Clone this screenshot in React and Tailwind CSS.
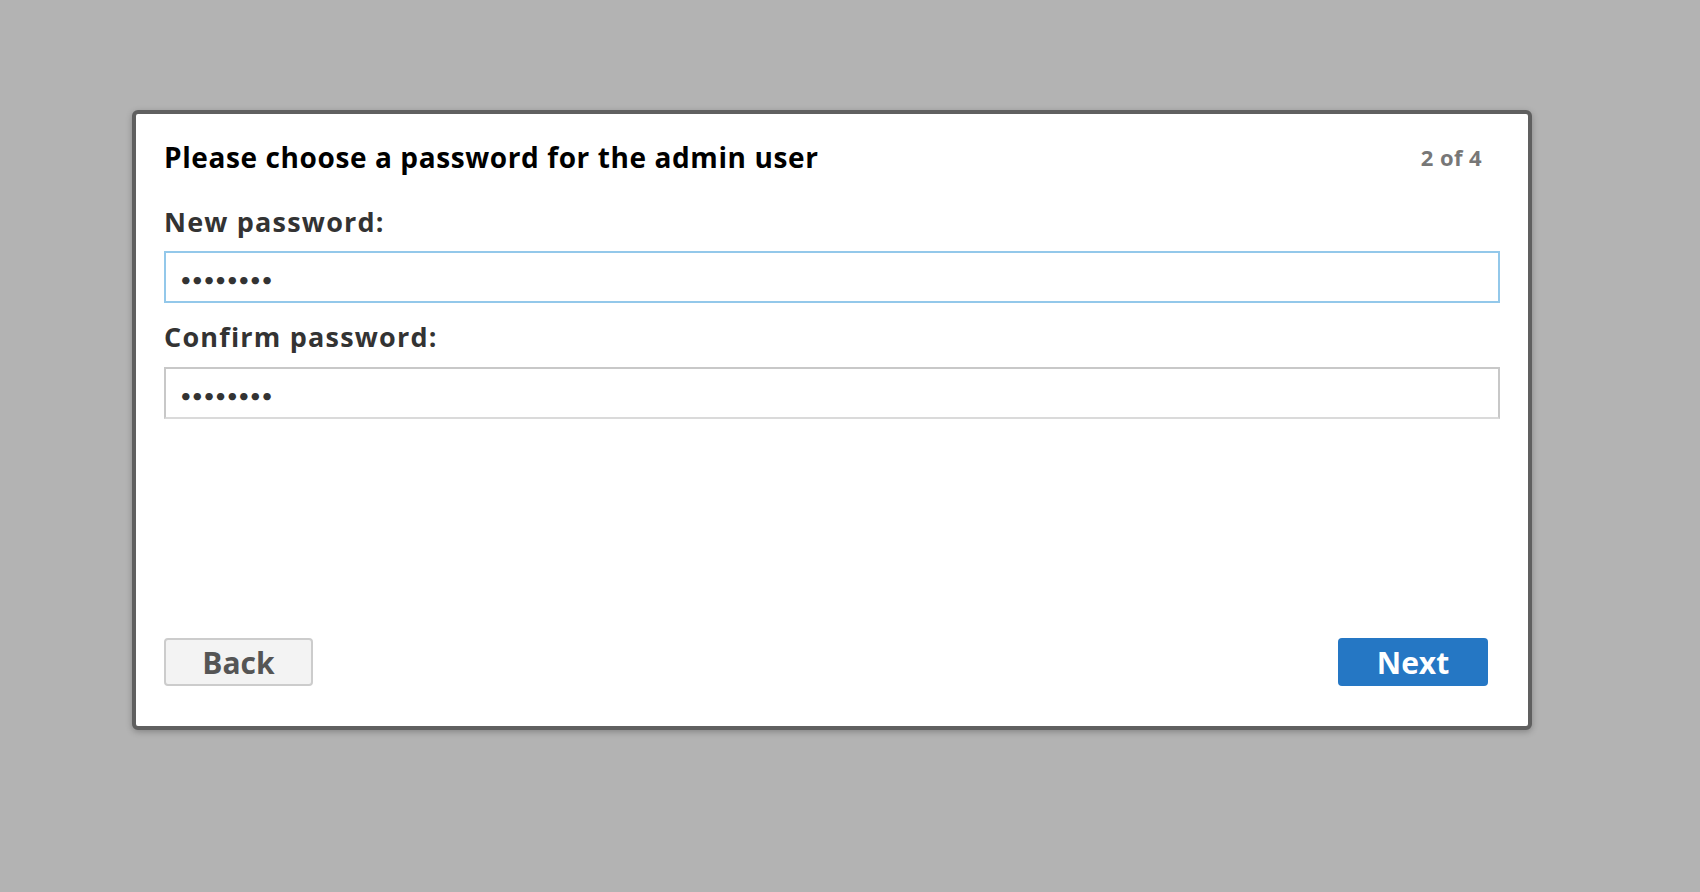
import React from "react";

const font = { fontFamily: "'Open Sans', Lato, Arial, sans-serif" };
const dots = { fontFamily: "Lato, 'Open Sans', Arial, sans-serif" };

export default function App() {
  return (
    <div className="min-h-[892px] w-full bg-[#b3b3b3] pt-[110px] pl-[132px]" style={font}>
      <div className="flex h-[620px] w-[1400px] flex-col rounded-[6px] border-4 border-[#606060] bg-white px-[28px] shadow-[0_2px_6px_rgba(0,0,0,0.25)]">
        <div className="mt-[26px] flex items-start justify-between">
          <h1 className="text-[28px] font-bold leading-[34px] tracking-[0.6px] text-black">
            Please choose a password for the admin user
          </h1>
          <span className="mr-[18px] text-[22px] font-bold leading-[34px] tracking-[0.4px] text-[#777]">2 of 4</span>
        </div>

        <label className="mt-[31px] block text-[27px] font-bold leading-[34px] tracking-[1.2px] text-[#333]">New password:</label>
        <input
          type="password"
          defaultValue="password"
          style={dots}
          className="mt-[12px] h-[52px] w-full border-2 border-[#93c8ea] px-[14px] pt-[3px] text-[20px] text-[#333] outline-none"
        />

        <label className="mt-[17px] block text-[27px] font-bold leading-[34px] tracking-[1.2px] text-[#333]">Confirm password:</label>
        <input
          type="password"
          defaultValue="password"
          style={dots}
          className="mt-[13px] h-[52px] w-full border-2 border-[#c8c8c8] border-b-[#dadada] px-[14px] pt-[3px] text-[20px] text-[#333] outline-none"
        />

        <div className="mt-auto mb-[40px] flex items-center justify-between pr-[12px]">
          <button className="h-[48px] w-[149px] rounded-[4px] border-2 border-[#cccccc] bg-[#f3f3f3] text-[30px] font-bold text-[#555]">
            Back
          </button>
          <button className="h-[48px] w-[150px] rounded-[4px] bg-[#2577c4] text-[30px] font-bold text-white">
            Next
          </button>
        </div>
      </div>
    </div>
  );
}
